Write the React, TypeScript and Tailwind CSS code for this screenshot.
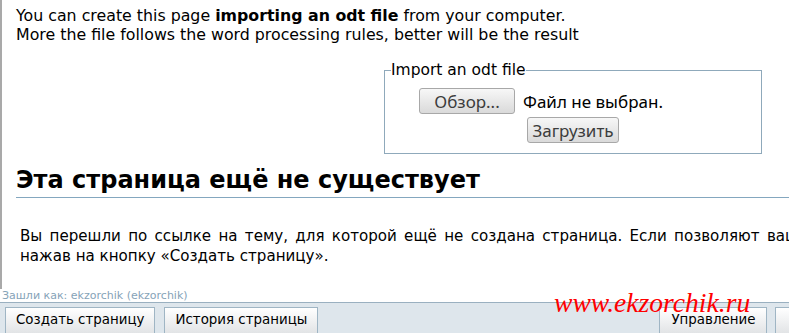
import React from "react";

const body = { fontFamily: '"DejaVu Sans", Verdana, sans-serif' };
const ui = { fontFamily: '"Noto Sans", "Open Sans", sans-serif' };

function UiButton({ children, className = "" }: { children: React.ReactNode; className?: string }) {
  return (
    <span
      style={ui}
      className={
        "inline-flex items-center justify-center rounded-[3px] border border-[#a8a8a8] bg-gradient-to-b from-[#f7f7f7] to-[#dadada] text-[17px] leading-none text-[#3c3c3c] " +
        className
      }
    >
      {children}
    </span>
  );
}

function BarButton({ children, className = "px-[10px]" }: { children: React.ReactNode; className?: string }) {
  return (
    <span
      className={
        "inline-flex h-[27px] shrink-0 items-center border border-[#9fb5c4] bg-gradient-to-b from-[#ffffff] to-[#e2e4e6] text-[13.4px] text-black " +
        className
      }
    >
      {children}
    </span>
  );
}

export default function App() {
  return (
    <div className="flex h-[333px] w-[789px] flex-col overflow-hidden bg-white text-black" style={body}>
      <div className="min-h-0 flex-1 overflow-hidden">
        <div className="h-full w-[1100px] border-l-2 border-[#a9a9a9]">
          <div className="pl-[14px] pt-[6px] text-[15.8px] leading-[19px]">
            <p>
              You can create this page <b>importing an odt file</b> from your computer.
            </p>
            <p>More the file follows the word processing rules, better will be the result</p>
          </div>

          <fieldset className="ml-[382px] mt-[17px] w-[378px] border border-[#8fa9bb] px-0 pb-[10px] pt-0">
            <legend className="ml-[6px] text-[15.5px] leading-[18px]">Import an odt file</legend>
            <div className="flex items-center pl-[34px] pt-[9px]">
              <UiButton className="h-[26px] w-[96px]">Обзор...</UiButton>
              <span style={ui} className="ml-[8px] text-[17px] leading-none text-black">
                Файл не выбран.
              </span>
            </div>
            <div className="mt-[3px] flex justify-center">
              <UiButton className="h-[26px] w-[92px]">Загрузить</UiButton>
            </div>
          </fieldset>

          <h1 className="ml-[14px] mt-[11px] border-b border-[#84a7bf] pb-[2px] text-[24px] font-bold leading-[30px]">
            Эта страница ещё не существует
          </h1>

          <div className="ml-[18px] mt-[28px] text-[15.1px] leading-[20px]">
            <p className="whitespace-nowrap [word-spacing:2.5px]">
              Вы перешли по ссылке на тему, для которой ещё не создана страница. Если позволяют ваши права доступа, вы можете создать её,
            </p>
            <p className="whitespace-nowrap">нажав на кнопку «Создать страницу».</p>
          </div>
        </div>
      </div>

      <div className="h-[13px] pl-[2px] text-[11px] leading-[13px] text-[#86a3b8]">Зашли как: ekzorchik (ekzorchik)</div>

      <div className="flex h-[31px] w-full shrink-0 border-t border-[#9ab0c0] bg-[#dee6ec] pl-[5px] pt-[4px]">
        <div className="flex gap-[9px]">
          <BarButton>Создать страницу</BarButton>
          <BarButton>История страницы</BarButton>
        </div>
        <div className="-mr-[57px] ml-auto flex gap-[8px]">
          <BarButton className="px-[11px]">Управление</BarButton>
          <BarButton className="pl-[16px] pr-[10px]">Войти</BarButton>
        </div>
      </div>

      <div
        className="pointer-events-none absolute left-[554px] top-[289px] text-[27.6px] italic leading-none text-[#ff0000]"
        style={{ fontFamily: '"Liberation Serif", "Times New Roman", serif' }}
      >
        www.ekzorchik.ru
      </div>
    </div>
  );
}
